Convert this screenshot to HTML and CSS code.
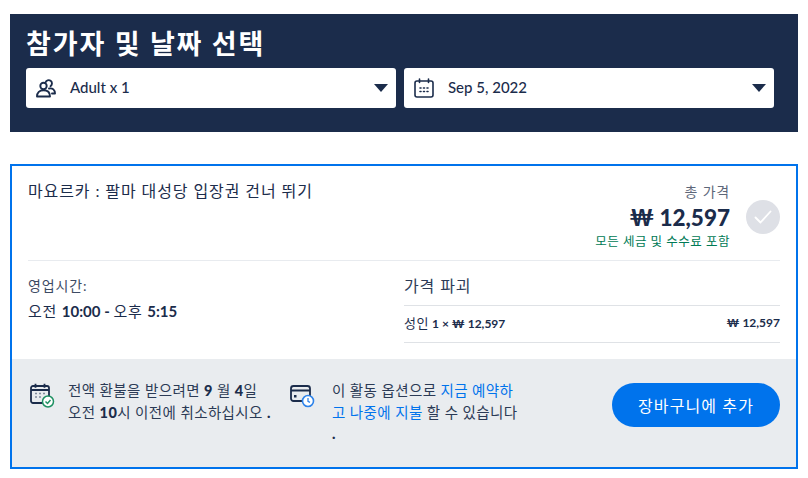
FILE: index.html
```html
<!DOCTYPE html>
<html lang="ko">
<head>
<meta charset="utf-8">
<title>참가자 및 날짜 선택</title>
<link rel="stylesheet" href="styles.css">
</head>
<body>
<section class="picker">
  <h1 class="picker-title">참가자 및 날짜 선택</h1>
  <div class="picker-row">
    <div class="select">
      <svg class="select-icon" width="20" height="20" viewBox="0 0 20 20" fill="none" stroke="#1b2c4b" stroke-width="1.900" stroke-linejoin="round" stroke-linecap="round">
        <circle cx="7.500" cy="8" r="3.200"/>
        <path d="M1 18.500c0-4 2.500-6.300 6.500-6.300s6.500 2.300 6.500 6.300z"/>
        <path d="M9.500 4.500a3.300 3.300 0 1 1 5 3.700"/>
        <path d="M13 10.500c3.700-.8 6 1.400 6 5h-3"/>
      </svg>
      <span class="select-label">Adult x 1</span>
      <span class="caret"></span>
    </div>
    <div class="select">
      <svg class="select-icon" width="20" height="20" viewBox="0 0 20 20" fill="none" stroke="#1b2c4b" stroke-width="1.600" stroke-linecap="round">
        <rect x="1" y="3" width="18" height="16" rx="2"/>
        <path d="M5.500 1v3.500M14.500 1v3.500"/>
        <path d="M6 10h1M9.500 10h1M13 10h1M6 13.500h1M9.500 13.500h1M13 13.500h1"/>
      </svg>
      <span class="select-label">Sep 5, 2022</span>
      <span class="caret"></span>
    </div>
  </div>
</section>

<section class="card">
  <div class="card-body">
    <div class="summary">
      <div class="activity-name">마요르카 : 팔마 대성당 입장권 건너 뛰기</div>
      <div class="price-block">
        <div class="price-label">총 가격</div>
        <div class="price-total">₩ 12,597</div>
        <div class="price-note">모든 세금 및 수수료 포함</div>
      </div>
      <div class="check">
        <svg width="24" height="24" viewBox="0 0 24 24" fill="none" stroke="#fff" stroke-width="1.800" stroke-linecap="round" stroke-linejoin="round"><path d="M4.500 12.500l5 5L19.500 6.500"/></svg>
      </div>
    </div>
    <div class="details">
      <div class="hours">
        <div class="hours-label">영업시간:</div>
        <div class="hours-value">오전 <span class="latin">10:00 - </span>오후 <span class="latin">5:15</span></div>
      </div>
      <div class="breakdown">
        <div class="breakdown-title">가격 파괴</div>
        <div class="breakdown-row">
          <span><span class="breakdown-ko">성인</span> 1 × ₩ 12,597</span>
          <span>₩ 12,597</span>
        </div>
      </div>
    </div>
  </div>
  <div class="card-footer">
    <div class="notice notice-refund">
      <svg class="notice-icon" width="26" height="26" viewBox="0 0 26 26" fill="none">
        <rect x="1" y="3" width="18" height="17" rx="2" stroke="#1b2c4b" stroke-width="1.800"/>
        <path d="M5.500 .8v4M14.500 .8v4M1 7h18" stroke="#1b2c4b" stroke-width="1.800"/>
        <path d="M5.500 10.500h1M9.500 10.500h1M13.500 10.500h1M5.500 14h1M9.500 14h1" stroke="#1b2c4b" stroke-width="1.300"/>
        <circle cx="18" cy="18.500" r="5.500" fill="#fff" stroke="#1f9163" stroke-width="1.500"/>
        <path d="M15.500 18.500l2 2 3-3.500" stroke="#1f9163" stroke-width="1.500" fill="none"/>
      </svg>
      <p class="notice-text">전액 환불을 받으려면 <b>9</b> 월 <b>4</b>일<br>오전 <b>10</b>시 이전에 취소하십시오 <b>.</b></p>
    </div>
    <div class="notice notice-later">
      <svg class="notice-icon" width="26" height="26" viewBox="0 0 26 26" fill="none">
        <rect x="1" y="3" width="19" height="15" rx="2.500" stroke="#1b2c4b" stroke-width="1.800"/>
        <path d="M1 7.500h19" stroke="#1b2c4b" stroke-width="2"/>
        <rect x="4" y="12" width="2.500" height="2.500" fill="#1b2c4b"/>
        <circle cx="18" cy="18" r="5.500" fill="#fff" stroke="#2d83ea" stroke-width="1.600"/>
        <path d="M18 15v3.300l2 1" stroke="#2d83ea" stroke-width="1.300"/>
      </svg>
      <p class="notice-text">이 활동 옵션으로 <span class="link">지금 예약하<br>고 나중에 지불</span> 할 수 있습니다<br><b>.</b></p>
    </div>
    <button class="add-button" type="button">장바구니에 추가</button>
  </div>
</section>
</body>
</html>
```

FILE: styles.css
```css
* { box-sizing: border-box; }

html, body { margin: 0; padding: 0; }

body {
  width: 808px;
  height: 478px;
  padding: 14px 10px 0;
  background: #fff;
  color: #1b2c4b;
  font-family: "Lato", "Noto Sans CJK KR", sans-serif;
  overflow: hidden;
}

.latin { letter-spacing: 0; font-weight: 700; }

.picker {
  height: 118px;
  padding: 12px 16px 0;
  background: #1b2c4b;
}

.picker-title {
  margin: 0 0 7px;
  height: 35px;
  color: #fff;
  font-size: 27px;
  line-height: 35px;
  font-weight: 700;
  letter-spacing: 1.900px;
}

.picker-row {
  display: flex;
  gap: 8px;
}

.select {
  display: flex;
  align-items: center;
  width: 370px;
  height: 40px;
  padding: 0 8px 0 10px;
  background: #fff;
  border-radius: 3px;
}

.select-icon { flex: none; }

.select-label {
  flex: 1;
  margin: -2px 0 0 14px;
  font-size: 15px;
  font-weight: 500;
}

.caret {
  width: 0;
  height: 0;
  border-left: 7px solid transparent;
  border-right: 7px solid transparent;
  border-top: 8px solid #1b2c4b;
}

.card {
  margin-top: 32px;
  height: 305px;
  border: 2px solid #0073ec;
}

.card-body {
  height: 193px;
  padding: 0 16px;
}

.summary {
  display: flex;
  height: 95px;
  padding-top: 14px;
  border-bottom: 1px solid #e8ebef;
}

.activity-name {
  flex: 1;
  font-size: 16px;
  line-height: 22px;
  letter-spacing: .9px;
}

.price-block {
  text-align: right;
}

.price-label {
  color: #5d6779;
  font-size: 14px;
  line-height: 16px;
  margin-top: 4px;
  letter-spacing: .8px;
}

.price-total {
  font-size: 22.500px;
  line-height: 30px;
  font-weight: 900;
  margin-top: 3px;
}

.price-note {
  color: #007a55;
  font-size: 12.500px;
  line-height: 16px;
  letter-spacing: .5px;
  margin-top: 1px;
}

.check {
  display: flex;
  align-items: center;
  justify-content: center;
  flex: none;
  width: 34px;
  height: 34px;
  margin: 20px 0 0 16px;
  border-radius: 50%;
  background: #dee0e6;
}

.details {
  display: flex;
  padding-top: 14px;
}

.hours {
  width: 376px;
  flex: none;
}

.hours-label {
  color: #3d4b64;
  font-size: 14px;
  line-height: 22px;
  letter-spacing: .9px;
}

.hours-value {
  margin-top: 3px;
  font-size: 15px;
  line-height: 22px;
  letter-spacing: .8px;
}

.breakdown { flex: 1; }

.breakdown-title {
  height: 31px;
  font-size: 16px;
  line-height: 22px;
  letter-spacing: .9px;
  color: #2d3c58;
  border-bottom: 1px solid #dfe2e6;
}

.breakdown-row {
  display: flex;
  justify-content: space-between;
  height: 37px;
  border-bottom: 1px solid #dfe2e6;
  font-size: 12px;
  line-height: 34px;
  font-weight: 700;
}

.breakdown-ko {
  font-size: 13px;
  font-weight: 400;
  letter-spacing: .6px;
}

.card-footer {
  display: flex;
  align-items: flex-start;
  height: 108px;
  padding: 24px 16px 0 18px;
  background: #e9ecef;
}

.notice {
  display: flex;
  flex: none;
}

.notice-refund { width: 260px; gap: 12px; }

.notice-later { width: 322px; gap: 16px; }

.notice-icon { flex: none; }

.notice-text {
  margin: -3px 0 0;
  font-size: 14.500px;
  line-height: 21.500px;
  letter-spacing: .4px;
  color: #2b3a55;
}

.notice-text b { font-weight: 900; color: #1b2c4b; }

.link { color: #0073ec; }

.add-button {
  flex: none;
  width: 168px;
  height: 44px;
  border: 0;
  border-radius: 22px;
  background: #0073ec;
  color: #fff;
  font-family: inherit;
  font-size: 16px;
  letter-spacing: 1.100px;
}
```
